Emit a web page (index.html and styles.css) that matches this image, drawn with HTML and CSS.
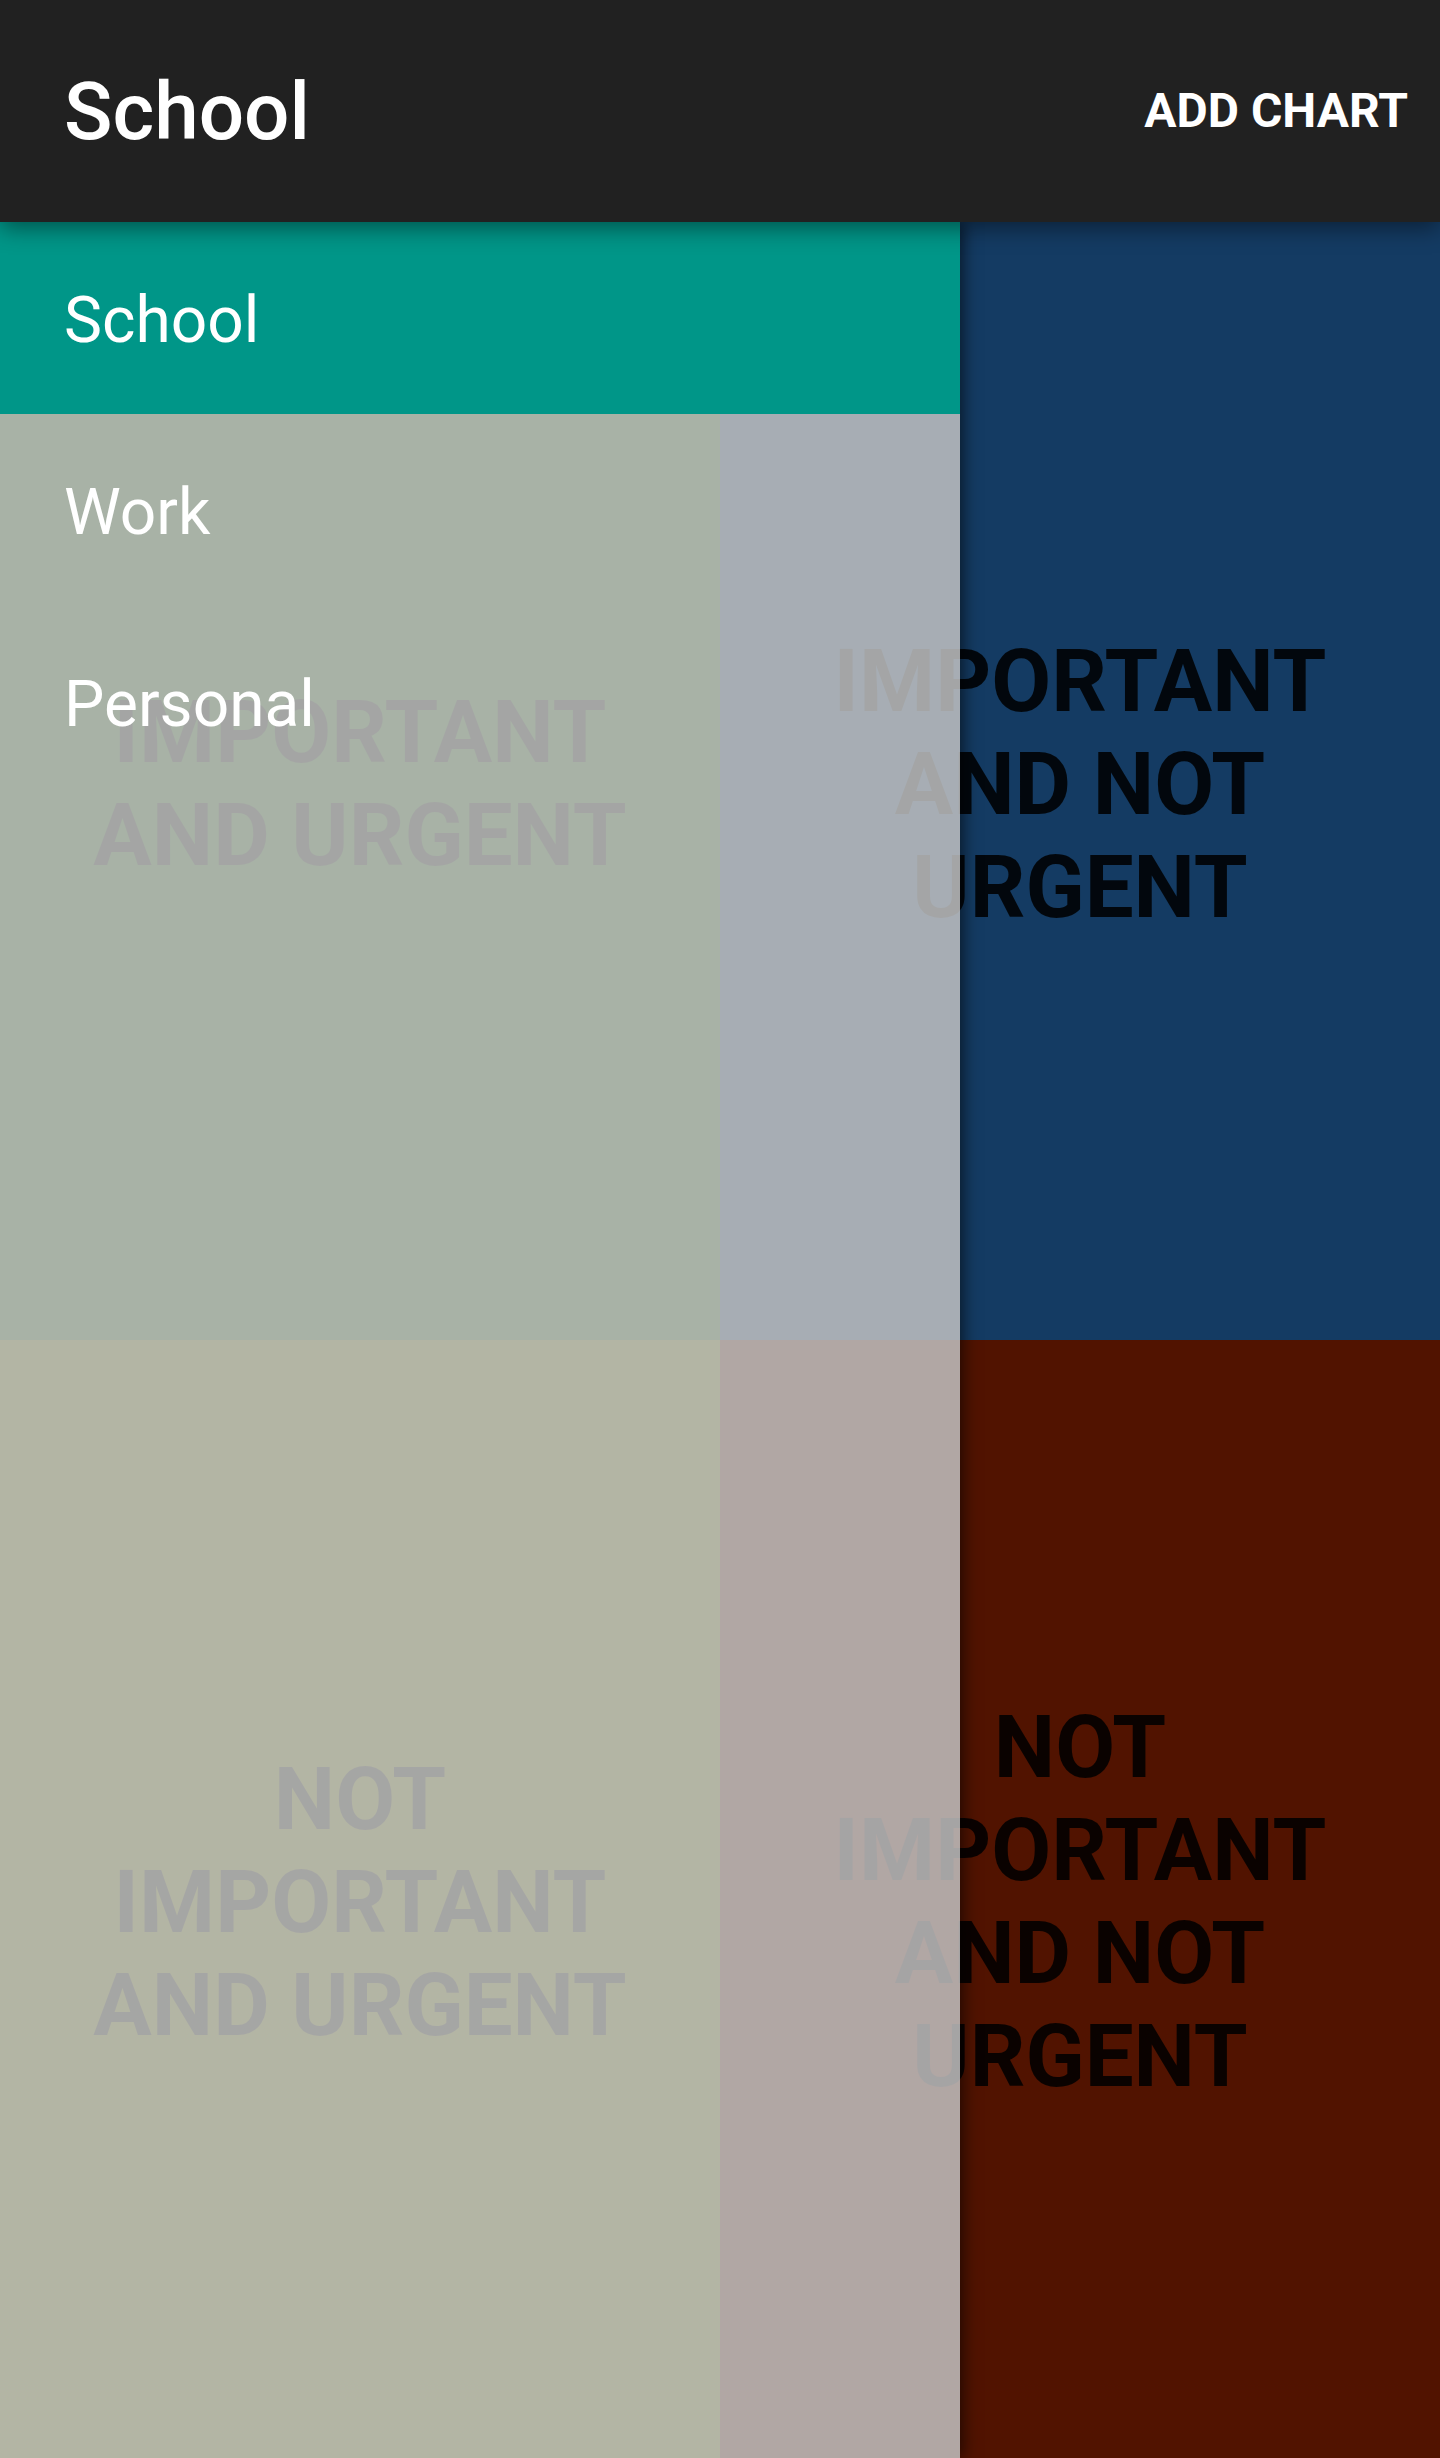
FILE: index.html
```html
<!DOCTYPE html>
<html lang="en">
<head>
<meta charset="utf-8">
<title>School</title>
<link rel="stylesheet" href="styles.css">
</head>
<body>
<header class="app-bar">
  <h1 class="app-title">School</h1>
  <button class="action-btn" type="button">ADD CHART</button>
</header>
<main class="content">
  <section class="matrix">
    <div class="quad quad-ua">IMPORTANT AND URGENT</div>
    <div class="quad quad-in">IMPORTANT AND NOT URGENT</div>
    <div class="quad quad-nu">NOT IMPORTANT AND URGENT</div>
    <div class="quad quad-nn">NOT IMPORTANT AND NOT URGENT</div>
  </section>
  <nav class="drawer">
    <ul class="drawer-list">
      <li class="drawer-item is-active">School</li>
      <li class="drawer-item">Work</li>
      <li class="drawer-item">Personal</li>
    </ul>
  </nav>
</main>
</body>
</html>
```

FILE: styles.css
```css
* { box-sizing: border-box; }

html, body {
  margin: 0;
  padding: 0;
}

body {
  width: 1440px;
  height: 2458px;
  overflow: hidden;
  font-family: Roboto, "Noto Sans", "Liberation Sans", sans-serif;
  background: #212121;
}

.app-bar {
  position: relative;
  z-index: 3;
  height: 222px;
  display: flex;
  align-items: center;
  justify-content: space-between;
  padding: 0 32px 0 64px;
  background: #212121;
  box-shadow: 0 6px 22px rgba(0, 0, 0, 0.45);
}

.app-title {
  margin: 0;
  font-size: 80px;
  font-weight: 500;
  color: #ffffff;
  line-height: 1;
  padding-top: 2px;
}

.action-btn {
  border: 0;
  background: transparent;
  color: #ffffff;
  font-family: Roboto, "Noto Sans", "Liberation Sans", sans-serif;
  font-size: 48px;
  font-weight: 700;
  padding: 0;
  margin: 0;
  line-height: 1;
}

.content {
  position: relative;
  height: 2236px;
}

.matrix {
  display: grid;
  grid-template-columns: 720px 720px;
  grid-template-rows: 1118px 1118px;
  height: 100%;
}

.quad {
  display: flex;
  align-items: center;
  justify-content: center;
  text-align: center;
  padding: 6px 32px 0;
  font-size: 87px;
  font-weight: 700;
  line-height: 103px;
  color: rgba(0, 0, 0, 0.87);
}

.quad-ua { background: #195710; }
.quad-in { background: #143b63; }
.quad-nu { background: #5e6a00; }
.quad-nn { background: #511300; }

.drawer {
  position: absolute;
  top: 0;
  left: 0;
  bottom: 0;
  width: 960px;
  z-index: 2;
  background: rgba(196, 196, 196, 0.84);
  box-shadow: 4px 0 14px rgba(0, 0, 0, 0.55);
}

.drawer-list {
  list-style: none;
  margin: 0;
  padding: 0;
}

.drawer-item {
  height: 192px;
  display: flex;
  align-items: center;
  padding: 5px 64px 0;
  font-size: 64px;
  font-weight: 400;
  color: #ffffff;
}

.drawer-item.is-active {
  background: #009688;
}
```
